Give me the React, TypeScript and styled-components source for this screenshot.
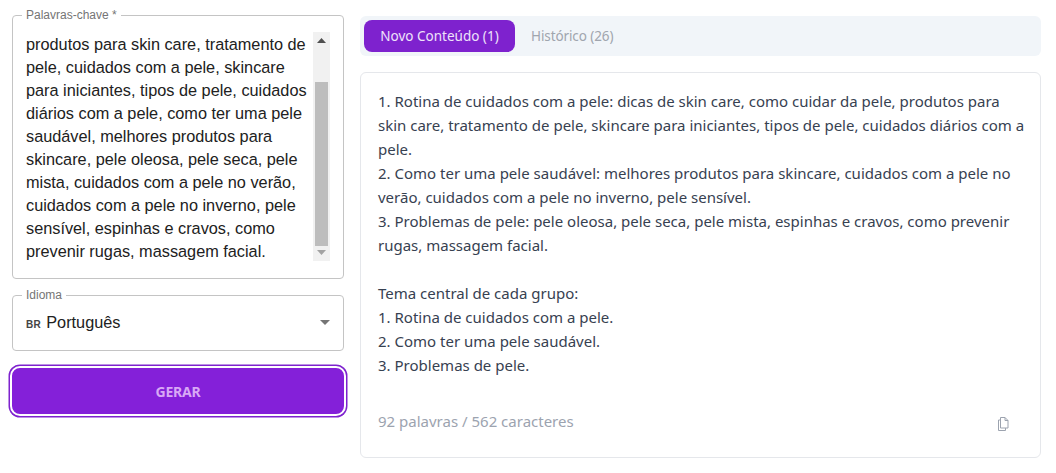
import React from 'react';
import styled, { createGlobalStyle } from 'styled-components';

const GlobalStyle = createGlobalStyle`
  html, body {
    margin: 0;
    padding: 0;
    background: #fff;
  }
  * {
    box-sizing: border-box;
  }
`;

const Page = styled.div`
  width: 1056px;
  height: 473px;
  display: grid;
  grid-template-columns: 332px 681px;
  column-gap: 16px;
  padding: 7px 15px 0 12px;
  overflow: hidden;
`;

const LeftColumn = styled.div`
  display: flex;
  flex-direction: column;
  gap: 8px;
  font-family: 'Liberation Sans', Arial, sans-serif;
`;

const Outlined = styled.fieldset<{ $height: number }>`
  height: ${(p) => p.$height}px;
  margin: 0;
  padding: 0 13px 0 13px;
  border: 1px solid #c4c4c4;
  border-radius: 4px;
  min-width: 0;
`;

const Legend = styled.legend`
  margin-left: -4px;
  padding: 0 4px;
  font-size: 12px;
  line-height: 16px;
  color: #757575;
`;

const KeywordsRow = styled.div`
  display: flex;
  justify-content: space-between;
  padding-top: 9px;
`;

const Keywords = styled.div`
  width: 286px;
  padding-top: 1px;
  font-size: 16.3px;
  line-height: 23px;
  color: #212121;
`;

const Scrollbar = styled.div`
  width: 17px;
  height: 229px;
  background: #f1f1f1;
  display: flex;
  flex-direction: column;
  align-items: center;
`;

const ScrollArrow = styled.div`
  height: 17px;
  flex: none;
  display: flex;
  align-items: center;
  justify-content: center;
`;

const ScrollThumb = styled.div`
  width: 13px;
  height: 164px;
  margin-top: 33px;
  margin-bottom: -2px;
  background: #bdbdbd;
  flex: none;
`;

const SelectRow = styled.div`
  display: flex;
  align-items: center;
  justify-content: space-between;
  height: 39px;
`;

const LanguageValue = styled.div`
  display: flex;
  align-items: baseline;
  gap: 5px;
  font-size: 16.3px;
  color: #212121;
`;

const FlagCode = styled.span`
  font-size: 10px;
  font-weight: 700;
  letter-spacing: 0.4px;
  color: #444;
`;

const GenerateButton = styled.button`
  height: 46px;
  margin: 9px 0 0 0;
  border: none;
  border-radius: 8px;
  background: #8420d9;
  color: #d8a8f5;
  outline: 2px solid #fff;
  box-shadow: 0 0 0 3.5px #7e22ce;
  font-family: 'Noto Sans', 'Open Sans', sans-serif;
  font-size: 14px;
  font-weight: 700;
  letter-spacing: -0.2px;
  cursor: pointer;
`;

const RightColumn = styled.div`
  display: flex;
  flex-direction: column;
  gap: 16px;
  font-family: 'Noto Sans', 'Open Sans', sans-serif;
  padding-top: 9px;
`;

const TabBar = styled.div`
  height: 40px;
  padding: 4px;
  display: flex;
  background: #f1f5f9;
  border-radius: 6px;
`;

const Tab = styled.div<{ $active?: boolean }>`
  height: 32px;
  width: ${(p) => (p.$active ? '151px' : 'auto')};
  padding: 0 16px;
  display: flex;
  align-items: center;
  justify-content: center;
  border-radius: 8px;
  font-size: 13.5px;
  white-space: nowrap;
  background: ${(p) => (p.$active ? '#7e22ce' : 'transparent')};
  color: ${(p) => (p.$active ? '#efe2fa' : '#a0a5ae')};
  letter-spacing: ${(p) => (p.$active ? '0' : '-0.1px')};
`;

const Card = styled.div`
  height: 386px;
  padding: 16px 12px 0 17px;
  border: 1px solid #e5e7eb;
  border-radius: 6px;
  display: flex;
  flex-direction: column;
`;

const Output = styled.div`
  height: 308px;
  font-size: 15px;
  line-height: 24px;
  color: #374151;
  white-space: pre-line;
`;

const CardFooter = styled.div`
  display: flex;
  justify-content: space-between;
  align-items: flex-start;
  padding-right: 17px;
`;

const Counter = styled.div`
  font-size: 15px;
  line-height: 24px;
  margin-top: 12px;
  color: #9ca3af;
`;

const CopyIcon = styled.svg`
  width: 16px;
  height: 16px;
  margin-top: 19px;
  color: #9ca3af;
`;

const keywords =
  'produtos para skin care, tratamento de pele, cuidados com a pele, skincare para iniciantes, tipos de pele, cuidados diários com a pele, como ter uma pele saudável, melhores produtos para skincare, pele oleosa, pele seca, pele mista, cuidados com a pele no verão, cuidados com a pele no inverno, pele sensível, espinhas e cravos, como prevenir rugas, massagem facial.';

const output = `1. Rotina de cuidados com a pele: dicas de skin care, como cuidar da pele, produtos para skin care, tratamento de pele, skincare para iniciantes, tipos de pele, cuidados diários com a pele.
2. Como ter uma pele saudável: melhores produtos para skincare, cuidados com a pele no verão, cuidados com a pele no inverno, pele sensível.
3. Problemas de pele: pele oleosa, pele seca, pele mista, espinhas e cravos, como prevenir rugas, massagem facial.

Tema central de cada grupo:
1. Rotina de cuidados com a pele.
2. Como ter uma pele saudável.
3. Problemas de pele.`;

const App: React.FC = () => {
  return (
    <Page>
      <GlobalStyle />
      <LeftColumn>
        <Outlined $height={272}>
          <Legend>Palavras-chave *</Legend>
          <KeywordsRow>
            <Keywords>{keywords}</Keywords>
            <Scrollbar>
              <ScrollArrow>
                <svg width="9" height="5" viewBox="0 0 9 5"><path d="M4.5 0L9 5H0z" fill="#505050" /></svg>
              </ScrollArrow>
              <ScrollThumb />
              <ScrollArrow>
                <svg width="9" height="5" viewBox="0 0 9 5"><path d="M4.5 5L0 0h9z" fill="#a3a3a3" /></svg>
              </ScrollArrow>
            </Scrollbar>
          </KeywordsRow>
        </Outlined>
        <Outlined $height={64}>
          <Legend>Idioma</Legend>
          <SelectRow>
            <LanguageValue>
              <FlagCode>BR</FlagCode>
              Português
            </LanguageValue>
            <svg width="10" height="5" viewBox="0 0 10 5"><path d="M0 0h10L5 5z" fill="#757575" /></svg>
          </SelectRow>
        </Outlined>
        <GenerateButton>GERAR</GenerateButton>
      </LeftColumn>
      <RightColumn>
        <TabBar>
          <Tab $active>Novo Conteúdo (1)</Tab>
          <Tab>Histórico (26)</Tab>
        </TabBar>
        <Card>
          <Output>{output}</Output>
          <CardFooter>
            <Counter>92 palavras / 562 caracteres</Counter>
            <CopyIcon viewBox="0 0 16 16" fill="none" stroke="currentColor" strokeWidth="1">
              <path d="M5.5 1.5h4.5l3 3v7.5h-7.5z" />
              <path d="M10 1.5v3h3" />
              <path d="M5.5 4H3.5v10.5h7V12" />
            </CopyIcon>
          </CardFooter>
        </Card>
      </RightColumn>
    </Page>
  );
};

export default App;
